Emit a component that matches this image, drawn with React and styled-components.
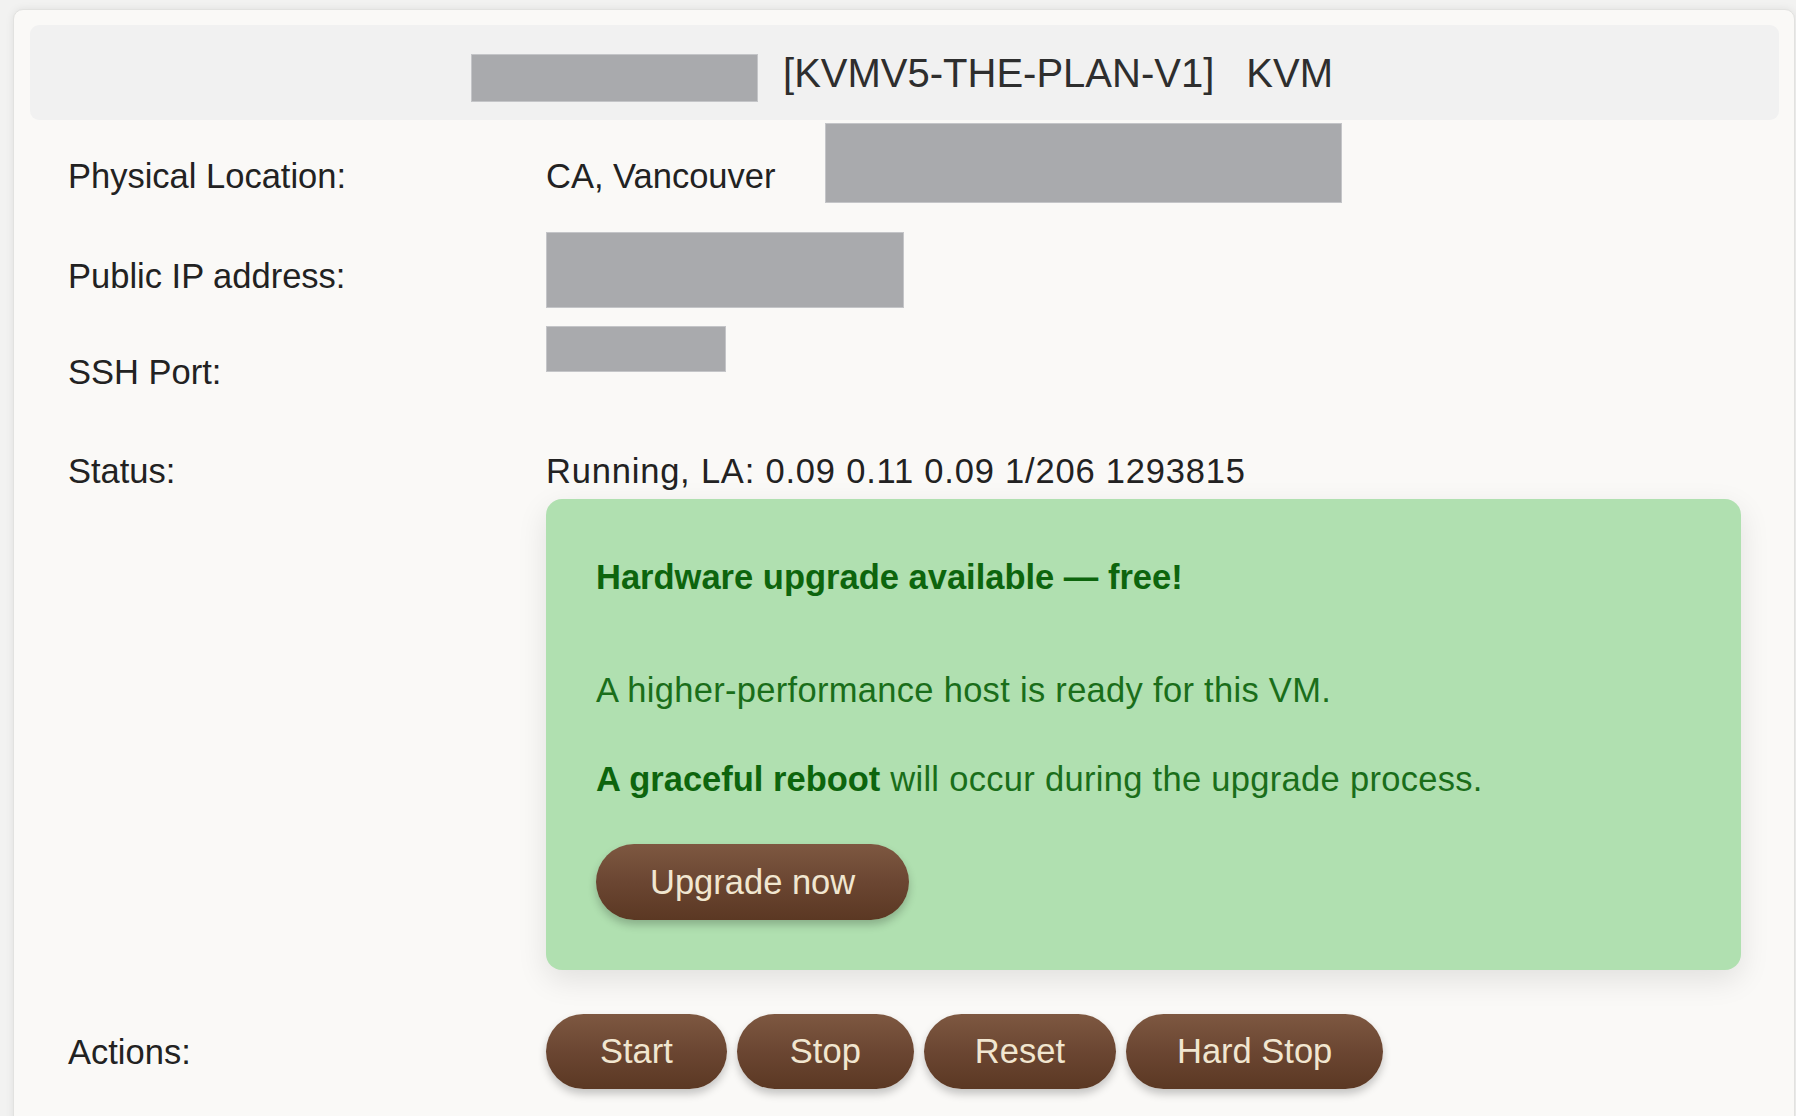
import React from "react";
import styled, { createGlobalStyle } from "styled-components";

const Global = createGlobalStyle`
  html, body { margin: 0; padding: 0; background: #f2f2f1; }
  body { font-family: "Liberation Sans", Arial, sans-serif; color: #222; }
  * { box-sizing: border-box; }
`;

const Page = styled.div`
  padding: 9px 1px 0 13px;
  min-height: 1116px;
`;

const Card = styled.div`
  background: #faf9f7;
  border: 1px solid #e2e2e0;
  border-radius: 10px;
  box-shadow: 0 0 8px rgba(0, 0, 0, 0.08);
  padding: 15px 15px 40px 16px;
  min-height: 1140px;
`;

const Header = styled.div`
  height: 95px;
  background: #f1f1f1;
  border-radius: 9px;
  display: flex;
  align-items: center;
  justify-content: center;
  gap: 25px;
  padding-right: 5px;
`;

const Redacted = styled.div`
  width: ${(p) => p.$w}px;
  height: ${(p) => p.$h}px;
  background: #a9aaad;
  border: 1px solid #c4c5c8;
  flex: none;
  margin-top: ${(p) => p.$mt || 0}px;
  margin-bottom: ${(p) => p.$mb || 0}px;
`;

const Title = styled.div`
  font-size: 40px;
  color: #2e2e2e;
  display: flex;
  gap: 32px;
  line-height: 48px;
`;

const Table = styled.div`
  padding: 0 38px;
`;

const Row = styled.div`
  display: grid;
  grid-template-columns: 478px 1fr;
  align-items: center;
  height: ${(p) => (p.$h ? `${p.$h}px` : "auto")};
  margin-top: ${(p) => p.$mt || 0}px;
`;

const Label = styled.div`
  font-size: 34.5px;
  line-height: 46px;
  color: #222;
`;

const Value = styled.div`
  display: flex;
  align-items: center;
  gap: 50px;
  font-size: 34.5px;
  line-height: 46px;
  color: #222;
  letter-spacing: ${(p) => p.$ls || 0}px;
`;

const Notice = styled.div`
  grid-column: 2;
  margin-top: 5px;
  background: #b0e0b0;
  border-radius: 16px;
  padding: 50px;
  box-shadow: 0 10px 30px rgba(0, 0, 0, 0.1);
  color: #1a6b1a;
`;

const NoticeTitle = styled.div`
  font-size: 34.5px;
  line-height: 56px;
  font-weight: bold;
  color: #0d650d;
`;

const NoticeText = styled.p`
  margin: ${(p) => p.$mt}px 0 0;
  font-size: 34.5px;
  line-height: 56px;
  letter-spacing: 0.3px;
  color: #1a6e1a;
  b { color: #0d650d; letter-spacing: 0; }
`;

const Pill = styled.button`
  height: ${(p) => p.$h || 75}px;
  padding: 0 ${(p) => p.$px || 54}px;
  border: none;
  border-radius: 40px;
  background: linear-gradient(180deg, #7e5841 0%, #6b4632 50%, #5b3823 100%);
  color: #f1e6d0;
  font-family: "Liberation Sans", Arial, sans-serif;
  font-size: 34.5px;
  box-shadow: 0 5px 8px rgba(0, 0, 0, 0.22);
  cursor: pointer;
  flex: none;
`;

const UpgradeWrap = styled.div`
  margin-top: 37px;
`;

const Actions = styled.div`
  display: flex;
  gap: 10px;
`;

export default function App() {
  return (
    <>
      <Global />
      <Page>
        <Card>
          <Header>
            <Redacted $w={287} $h={48} $mt={10} />
            <Title>
              <span>[KVMV5-THE-PLAN-V1]</span>
              <span>KVM</span>
            </Title>
          </Header>
          <Table>
            <Row $h={112}>
              <Label>Physical Location:</Label>
              <Value>
                <span>CA, Vancouver</span>
                <Redacted $w={517} $h={80} $mb={26} />
              </Value>
            </Row>
            <Row $h={86}>
              <Label>Public IP address:</Label>
              <Value>
                <Redacted $w={358} $h={76} $mb={12} />
              </Value>
            </Row>
            <Row $h={108}>
              <Label>SSH Port:</Label>
              <Value>
                <Redacted $w={180} $h={46} $mb={46} />
              </Value>
            </Row>
            <Row $mt={22}>
              <Label>Status:</Label>
              <Value $ls={0.8}>Running, LA: 0.09 0.11 0.09 1/206 1293815</Value>
              <Notice>
                <NoticeTitle>Hardware upgrade available — free!</NoticeTitle>
                <NoticeText $mt={57}>A higher-performance host is ready for this VM.</NoticeText>
                <NoticeText $mt={33}>
                  <b>A graceful reboot</b> will occur during the upgrade process.
                </NoticeText>
                <UpgradeWrap>
                  <Pill $h={76}>Upgrade now</Pill>
                </UpgradeWrap>
              </Notice>
            </Row>
            <Row $mt={44}>
              <Label>Actions:</Label>
              <Actions>
                <Pill>Start</Pill>
                <Pill $px={53}>Stop</Pill>
                <Pill $px={51}>Reset</Pill>
                <Pill $px={51}>Hard Stop</Pill>
              </Actions>
            </Row>
          </Table>
        </Card>
      </Page>
    </>
  );
}
